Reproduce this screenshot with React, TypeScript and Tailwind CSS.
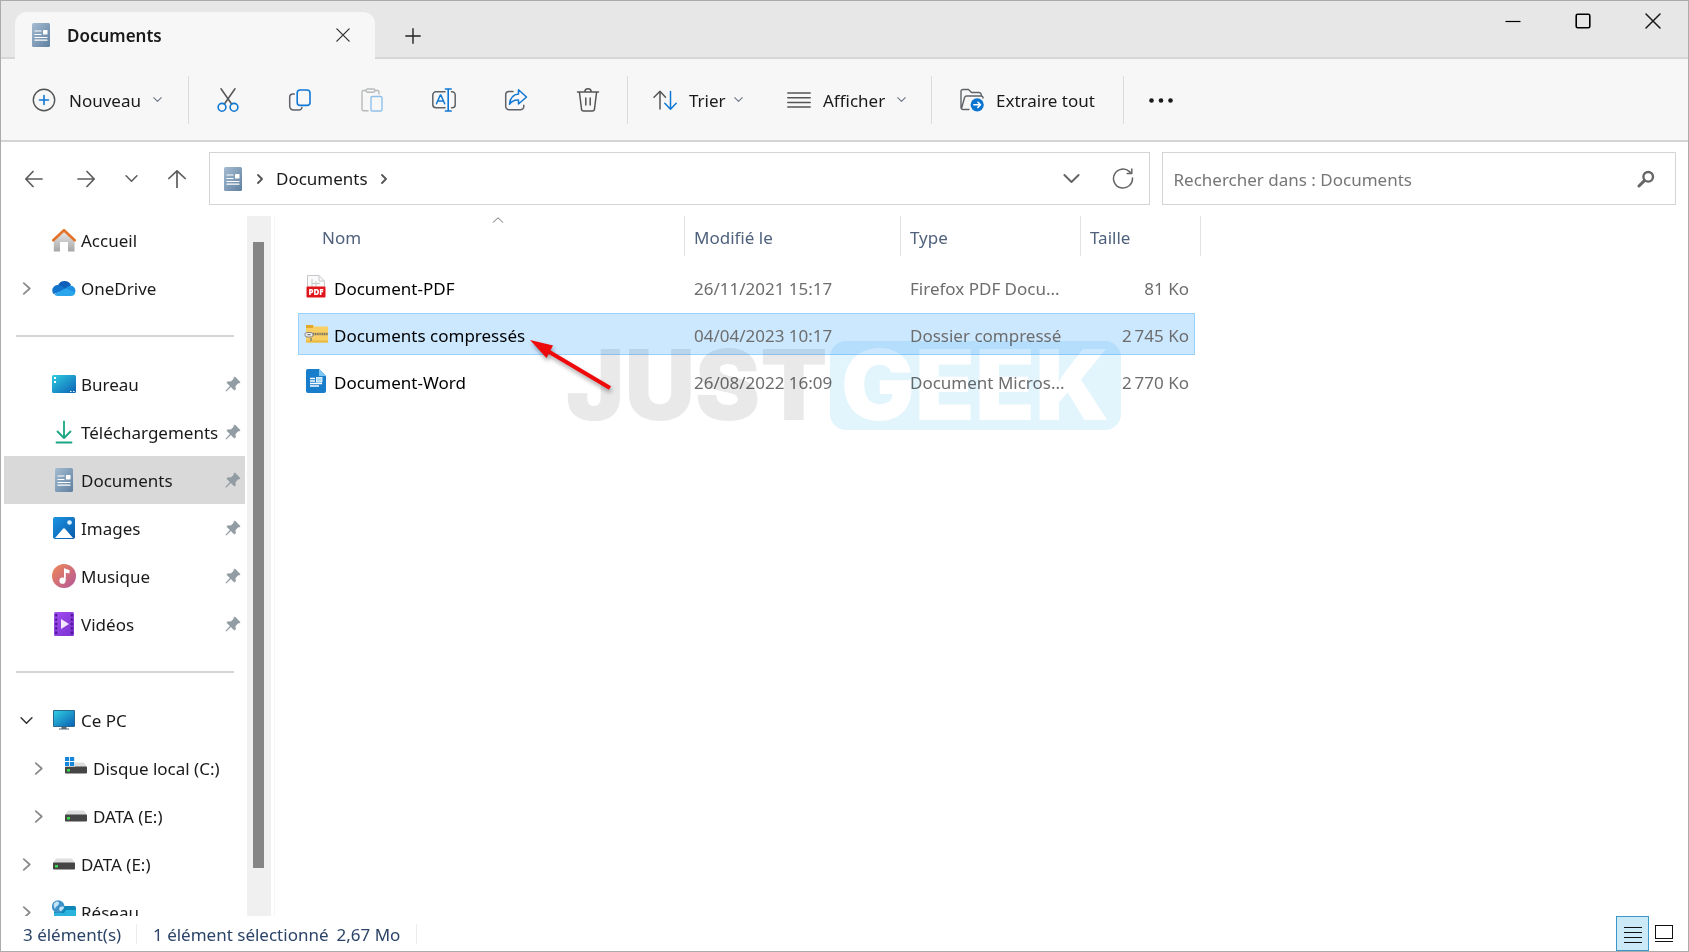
import { useState } from "react"
import type { ReactNode } from "react"

type IconProps = { className?: string }

const stroke = {
  fill: "none",
  strokeLinecap: "round" as const,
  strokeLinejoin: "round" as const,
}

/* ---------- Generic glyphs ---------- */

function ChevronDown({ className = "w-[9px] h-[9px] text-gray-500" }: IconProps) {
  return (
    <svg viewBox="0 0 12 12" className={className} stroke="currentColor" strokeWidth="1.4" {...stroke}>
      <path d="M1 3.5 6 8.5 11 3.5" />
    </svg>
  )
}

function ChevronRight({ className = "w-3 h-3 text-gray-500" }: IconProps) {
  return (
    <svg viewBox="0 0 12 12" className={className} stroke="currentColor" strokeWidth="1.6" {...stroke}>
      <path d="M3.5 1 9 6 3.5 11" />
    </svg>
  )
}

function CrumbArrow() {
  return (
    <svg viewBox="0 0 6 10" className="h-[10px] w-1.5" stroke="#555" strokeWidth="1.8" {...stroke}>
      <path d="M1 1 5 5 1 9" />
    </svg>
  )
}

function CloseIcon({ className = "w-4 h-4" }: IconProps) {
  return (
    <svg viewBox="0 0 16 16" className={className} stroke="currentColor" strokeWidth="1.5" {...stroke}>
      <path d="M1 1 15 15M15 1 1 15" />
    </svg>
  )
}

function DocumentsIcon() {
  return (
    <svg viewBox="0 0 24 24" className="w-6 h-6 shrink-0">
      <defs>
        <linearGradient id="docGrad" x1="0" y1="0" x2="1" y2="1">
          <stop offset="0" stopColor="#a4bcd2" />
          <stop offset="1" stopColor="#5f80a0" />
        </linearGradient>
      </defs>
      <rect x="3" y="0" width="18" height="24" rx="1.5" fill="url(#docGrad)" />
      <path d="M6 8h6M6 11.5h6M6 14.5h12M6 17.2h12" stroke="#fff" strokeWidth="1.2" strokeLinecap="round" />
      <rect x="14" y="7" width="4.5" height="4.5" rx="0.6" fill="#fff" />
    </svg>
  )
}

/* ---------- Toolbar icons ---------- */

function NewIcon() {
  return (
    <svg viewBox="0 0 24 24" className="w-6 h-6" strokeWidth="1.4" {...stroke}>
      <circle cx="12" cy="12" r="10.7" stroke="#555" />
      <path d="M12 7.5v9M7.5 12h9" stroke="#0f78d4" strokeWidth="1.6" />
    </svg>
  )
}

function CutIcon() {
  return (
    <svg viewBox="0 0 24 24" className="w-6 h-6" strokeWidth="1.5" {...stroke}>
      <path d="M5 .8 15.6 16M19 .8 8.4 16" stroke="#555" />
      <circle cx="6" cy="19.3" r="3.9" stroke="#0f78d4" strokeWidth="1.6" />
      <circle cx="18" cy="19.3" r="3.9" stroke="#0f78d4" strokeWidth="1.6" />
    </svg>
  )
}

function CopyIcon() {
  return (
    <svg viewBox="0 0 24 24" className="w-6 h-6" strokeWidth="1.5" {...stroke}>
      <path d="M6.3 6H5a3.3 3.3 0 0 0-3.3 3.3v8.9A3.8 3.8 0 0 0 5.5 22h5.3a3.2 3.2 0 0 0 3.1-2.4" stroke="#5f6368" />
      <rect x="9.2" y="2" width="12.8" height="15.4" rx="3" stroke="#0f78d4" strokeWidth="1.6" />
    </svg>
  )
}

function PasteIcon() {
  return (
    <svg viewBox="0 0 24 24" className="w-6 h-6" strokeWidth="1.4" {...stroke}>
      <path d="M8 22.8H3.5A1.5 1.5 0 0 1 2 21.3V4a1.5 1.5 0 0 1 1.5-1.5H6M15 2.5h2.5A1.5 1.5 0 0 1 19 4v2" stroke="#b8babc" />
      <rect x="6" y="1" width="9" height="3.2" rx="1.6" stroke="#b8babc" />
      <rect x="11" y="8.5" width="11" height="14.5" rx="1.3" stroke="#8fc0ea" />
    </svg>
  )
}

function RenameIcon() {
  return (
    <svg viewBox="0 0 24 24" className="w-6 h-6" strokeWidth="1.5" {...stroke}>
      <path d="M13 3.8H4A3.2 3.2 0 0 0 .8 7v9.5A3.2 3.2 0 0 0 4 19.7h9M19.5 3.8h.7a3 3 0 0 1 3 3v9.9a3 3 0 0 1-3 3h-.7" stroke="#5f6368" />
      <path d="M4.500 15.800 8.300 7h.6l3.800 8.800M5.800 13h5.600" stroke="#0f78d4" />
      <path d="M16.200 1v22M13.400 1h5.800M13.400 23h5.800" stroke="#0f78d4" strokeWidth="1.6" />
    </svg>
  )
}

function ShareIcon() {
  return (
    <svg viewBox="0 0 24 24" className="w-6 h-6" strokeWidth="1.5" {...stroke}>
      <path d="M9 3.500H5A3.300 3.300 0 0 0 1.700 6.800V18.500A3.300 3.300 0 0 0 5 21.800h11.500a3.300 3.300 0 0 0 3.300-3.300v-1.200" stroke="#5f6368" />
      <path d="M14.500 1.800 22.500 9l-8 7v-4c-4-.3-6.700 1-9 4.200.6-6 3.600-9.800 9-10.200z" stroke="#0f78d4" />
    </svg>
  )
}

function TrashIcon() {
  return (
    <svg viewBox="0 0 24 24" className="w-6 h-6" stroke="#555" strokeWidth="1.5" {...stroke}>
      <path d="M1.500 4h21M3.400 4l2.100 17A2.200 2.200 0 0 0 7.700 23h8.600a2.200 2.200 0 0 0 2.200-2L20.600 4M8.800 4a3.200 3.200 0 0 1 6.400 0M9.800 10v7M14.200 10v7" />
    </svg>
  )
}

function SortIcon() {
  return (
    <svg viewBox="0 0 24 24" className="w-6 h-6" strokeWidth="1.5" {...stroke}>
      <path d="M7 21V3.500M1 9.300l6-6 5.500 6" stroke="#555" />
      <path d="M17.500 3.500v17.800M11.800 15.300l5.700 6 5.700-6" stroke="#0f78d4" />
    </svg>
  )
}

function LinesIcon() {
  return (
    <svg viewBox="0 0 24 24" className="w-6 h-6" stroke="#555" strokeWidth="1.5" {...stroke}>
      <path d="M.8 5h22.400M.8 9.700h22.400M.8 14.400h22.400M.8 19.100h22.400" />
    </svg>
  )
}

function ExtractIcon() {
  return (
    <svg viewBox="0 0 24 24" className="w-6 h-6" strokeWidth="1.4" {...stroke}>
      <path d="M9 21.500H3A2 2 0 0 1 1 19.500V3.500a2 2 0 0 1 2-2h5.500l3 3H19a2.300 2.300 0 0 1 2.300 2.300V8M1.500 20.500 4.600 9.500A2.200 2.200 0 0 1 6.700 8H21a2 2 0 0 1 2 2" stroke="#5f6368" />
      <circle cx="17.200" cy="16.800" r="6.600" fill="#0a74cf" />
      <path d="M13.800 16.800h6.600M17.900 14.200l2.600 2.600-2.600 2.600" stroke="#fff" strokeWidth="1.5" />
    </svg>
  )
}

function MoreIcon() {
  return (
    <svg viewBox="0 0 24 24" className="w-6 h-6" fill="#1a1a1a">
      <circle cx="2.5" cy="12.500" r="2.3" />
      <circle cx="12" cy="12.500" r="2.3" />
      <circle cx="21.5" cy="12.500" r="2.3" />
    </svg>
  )
}

/* ---------- Sidebar icons ---------- */

function HomeIcon() {
  return (
    <svg viewBox="0 0 24 24" className="w-6 h-6">
      <defs>
        <linearGradient id="homeGrad" x1="0" y1="0" x2="0" y2="1">
          <stop offset="0" stopColor="#e8e8e8" />
          <stop offset="1" stopColor="#a6a6a6" />
        </linearGradient>
      </defs>
      <path d="M12 3.500 1.800 12.500V23.500H8V14h8v9.500h6.500v-11z" fill="url(#homeGrad)" />
      <path d="M1.300 12.300 12 2.200 22.700 12.300" fill="none" stroke="#e3722a" strokeWidth="2.6" strokeLinecap="round" strokeLinejoin="round" />
    </svg>
  )
}

function OneDriveIcon() {
  return (
    <svg viewBox="0 0 24 24" className="w-6 h-6">
      <path d="M6 9.200A7.200 7.200 0 0 1 19 9l-5 5.500z" fill="#0f5fb8" />
      <path d="M5.500 9A5.600 5.600 0 0 0 1.500 18L14 14 9.500 10A7 7 0 0 0 5.500 9z" fill="#1173cc" />
      <path d="M18.500 9.500A5.200 5.200 0 0 1 22.800 17l-9.800-4A8 8 0 0 1 18.500 9.500z" fill="#1c8fe0" />
      <path d="M2.200 18.300 13.500 12.200l9.800 4.600A4.500 4.500 0 0 1 19 20H5.500a5 5 0 0 1-3.300-1.700z" fill="#2aa5ec" />
    </svg>
  )
}

function DesktopIcon() {
  return (
    <svg viewBox="0 0 24 24" className="w-6 h-6">
      <defs>
        <linearGradient id="deskGrad" x1="0" y1="0" x2="1" y2="1">
          <stop offset="0" stopColor="#30cde0" />
          <stop offset="1" stopColor="#0b61b5" />
        </linearGradient>
      </defs>
      <rect y="3" width="24" height="18" rx="1.5" fill="url(#deskGrad)" />
      <path d="M2 5h2v2H2zM2 9h2v2H2zM18 19h1.500v1H18zM21 19h1.500v1H21z" fill="#fff" />
    </svg>
  )
}

function DownloadIcon() {
  return (
    <svg viewBox="0 0 24 24" className="w-6 h-6" stroke="#19a583" strokeWidth="1.8" {...stroke}>
      <path d="M12 1.500v16M5.500 11.500l6.500 6.500 6.500-6.500M4.500 22.500h15" />
    </svg>
  )
}

function ImagesIcon() {
  return (
    <svg viewBox="0 0 24 24" className="w-6 h-6">
      <defs>
        <linearGradient id="imgGrad" x1="0" y1="0" x2="1" y2="1">
          <stop offset="0" stopColor="#1a94e3" />
          <stop offset="1" stopColor="#0a5aa8" />
        </linearGradient>
      </defs>
      <rect x="1" y="1" width="22" height="22" rx="2" fill="url(#imgGrad)" />
      <path d="M3 22 10.800 13a1.600 1.600 0 0 1 2.400 0L21 22z" fill="#fff" />
      <circle cx="17.5" cy="6.5" r="2.3" fill="#dff2ff" />
    </svg>
  )
}

function MusicIcon() {
  return (
    <svg viewBox="0 0 24 24" className="w-6 h-6">
      <defs>
        <linearGradient id="musicGrad" x1="0" y1="0" x2="1" y2="1">
          <stop offset="0" stopColor="#ef8a55" />
          <stop offset="1" stopColor="#b4549a" />
        </linearGradient>
      </defs>
      <circle cx="12" cy="12" r="12" fill="url(#musicGrad)" />
      <path d="M12 4.500 17.500 6v3.500L13.500 8.800V16.500z" fill="#fff" />
      <path d="M12 4.500h1.600v12H12z" fill="#fff" />
      <circle cx="10.5" cy="16.7" r="3.1" fill="#fff" />
    </svg>
  )
}

function VideoIcon() {
  return (
    <svg viewBox="0 0 24 24" className="w-6 h-6">
      <defs>
        <linearGradient id="vidGrad" x1="0" y1="0" x2="1" y2="1">
          <stop offset="0" stopColor="#a24ff0" />
          <stop offset="1" stopColor="#7a30d0" />
        </linearGradient>
      </defs>
      <rect x="2" y="0" width="20" height="24" rx="1.5" fill="url(#vidGrad)" />
      <path d="M4.200 2v20M19.800 2v20" stroke="#4a1590" strokeWidth="2" strokeDasharray="2.4 2" />
      <path d="M9 7v10l8-5z" fill="#f3e6ff" />
    </svg>
  )
}

function PcIcon() {
  return (
    <svg viewBox="0 0 24 24" className="w-6 h-6">
      <rect x="1" y="2" width="22" height="17" rx="1" fill="#27688c" />
      <rect x="2" y="3" width="20" height="15" fill="url(#deskGrad)" />
      <path d="M9.500 19h5v1.500H17V21.500H7V20.500h2.500z" fill="#5d6a74" />
    </svg>
  )
}

function DriveIcon({ system = false }: { system?: boolean }) {
  return (
    <svg viewBox="0 0 24 24" className="w-6 h-6">
      <path d="M4 6.500h16l3 4.500H1z" fill="#dedede" />
      <rect x="1" y="10.5" width="22" height="7" rx="0.8" fill="#454545" />
      <rect x="3" y="13" width="3" height="2.5" fill="#3ddc55" />
      {system && <path d="M0 0h11v10.500H0z" fill="#fff" />}
      {system && <path d="M1 1h4.200v4H1zM6 1h4.200v4H6zM1 6h4.200v4H1zM6 6h4.200v4H6z" fill="#1487dd" />}
    </svg>
  )
}

function NetworkIcon() {
  return (
    <svg viewBox="0 0 24 24" className="w-6 h-6">
      <path d="M6 6h16.500A1.500 1.500 0 0 1 24 7.500V22H2V12z" fill="#0f86b8" />
      <path d="M2 13h10l2-3h10v12H2z" fill="#2ab3dc" />
      <circle cx="6.2" cy="6.5" r="6.3" fill="#3f93c9" />
      <path d="M2 3.500c3-3 5-2 5 0S4 6 3.500 8 1 6 2 3.500zM8 7c2-1 4-.5 4 .5S9 11.500 8 11 7 8 8 7z" fill="#c5e4f5" />
    </svg>
  )
}

function PinIcon() {
  return (
    <svg viewBox="0 0 16 16" className="w-4 h-4" fill="#929ca3">
      <path d="M9.800.5 15.500 6.200 14 7.600 13.200 7.300 10.500 10.200 10.800 13.200 9.300 14.500 5.900 11.100 1.600 15.200.500 15.500.700 14.400 4.900 10.100 1.500 6.700 2.900 5.300 5.800 5.500 8.700 2.800 8.400 1.900z" />
    </svg>
  )
}

/* ---------- File icons ---------- */

function PdfIcon() {
  return (
    <svg viewBox="0 0 24 24" className="w-6 h-6">
      <path d="M3.500.5H15l5.500 5.500V13H3.500z" fill="#fafafa" stroke="#c4c8cc" />
      <path d="M15 .5V6h5.500M8 4v8M12 6v6M8 8.500h8" fill="none" stroke="#c4c8cc" />
      <rect x="2.5" y="11.5" width="19" height="11" rx="1" fill="#e0141b" />
      <text x="12" y="19.8" textAnchor="middle" fontSize="8" fontWeight="800" fontFamily="Open Sans, sans-serif" fill="#fff">
        PDF
      </text>
    </svg>
  )
}

function ZipIcon() {
  return (
    <svg viewBox="0 0 24 24" className="w-6 h-6">
      <path d="M2 3h7l1.500 1.500H24V20.500H2z" fill="#f7cf62" />
      <path d="M2 3h7V6H2z" fill="#e3a82a" />
      <path d="M2 18.500h22v2H2z" fill="#e9b93f" />
      <path d="M9 12h15" stroke="#7f7a68" strokeWidth="2.6" strokeDasharray="1.3 .5" />
      <rect x="1" y="10.500" width="8" height="4.500" rx="2" fill="#ececec" stroke="#858585" />
      <path d="M3.500 12.700h3M7 16v3" stroke="#777" strokeWidth="1.3" />
    </svg>
  )
}

function WordIcon() {
  return (
    <svg viewBox="0 0 24 24" className="w-6 h-6">
      <path d="M4 0h11l7 7v15a2 2 0 0 1-2 2H4a2 2 0 0 1-2-2V2a2 2 0 0 1 2-2z" fill="#187dcb" />
      <path d="M15 0 22 7H15z" fill="#7cc8f5" />
      <path d="M6 9.500h5M6 12h5M6 14.500h12M6 17h9" stroke="#fff" strokeWidth="1.3" />
      <rect x="12.5" y="8.5" width="5.5" height="4.5" fill="#a8dbf8" stroke="#fff" strokeWidth="0.8" />
    </svg>
  )
}

/* ---------- Data ---------- */

interface SideItem {
  id: string
  label: string
  icon: ReactNode
  arrow?: "right" | "down"
  pinned?: boolean
  nested?: boolean
}

const groups: SideItem[][] = [
  [
    { id: "home", label: "Accueil", icon: <HomeIcon /> },
    { id: "onedrive", label: "OneDrive", icon: <OneDriveIcon />, arrow: "right" },
  ],
  [
    { id: "desktop", label: "Bureau", icon: <DesktopIcon />, pinned: true },
    { id: "downloads", label: "Téléchargements", icon: <DownloadIcon />, pinned: true },
    { id: "documents", label: "Documents", icon: <DocumentsIcon />, pinned: true },
    { id: "images", label: "Images", icon: <ImagesIcon />, pinned: true },
    { id: "music", label: "Musique", icon: <MusicIcon />, pinned: true },
    { id: "videos", label: "Vidéos", icon: <VideoIcon />, pinned: true },
  ],
  [
    { id: "pc", label: "Ce PC", icon: <PcIcon />, arrow: "down" },
    { id: "c", label: "Disque local (C:)", icon: <DriveIcon system />, arrow: "right", nested: true },
    { id: "e-nested", label: "DATA (E:)", icon: <DriveIcon />, arrow: "right", nested: true },
    { id: "e", label: "DATA (E:)", icon: <DriveIcon />, arrow: "right" },
    { id: "network", label: "Réseau", icon: <NetworkIcon />, arrow: "right" },
  ],
]

const files = [
  { name: "Document-PDF", date: "26/11/2021 15:17", type: "Firefox PDF Docu...", size: "81 Ko", icon: <PdfIcon /> },
  { name: "Documents compressés", date: "04/04/2023 10:17", type: "Dossier compressé", size: "2\u2009745 Ko", icon: <ZipIcon /> },
  { name: "Document-Word", date: "26/08/2022 16:09", type: "Document Micros...", size: "2\u2009770 Ko", icon: <WordIcon /> },
]

const actions = [
  { label: "Couper", icon: <CutIcon /> },
  { label: "Copier", icon: <CopyIcon /> },
  { label: "Coller", icon: <PasteIcon />, disabled: true },
  { label: "Renommer", icon: <RenameIcon /> },
  { label: "Partager", icon: <ShareIcon /> },
  { label: "Supprimer", icon: <TrashIcon /> },
]

/* ---------- Sections ---------- */

function TitleBar() {
  return (
    <header className="flex h-[58px] shrink-0 items-end bg-[#e7e7e7] shadow-[inset_0_-2px_0_#d6d6d6]">
      <div className="ml-[14px] flex h-[47px] w-[360px] items-center rounded-t-xl bg-[#f7f7f7] pr-[25px] pl-[14px] pb-0.5">
        <DocumentsIcon />
        <span className="ml-[14px] flex-1 pt-0.5 font-semibold text-[#1a1a1a]">Documents</span>
        <button aria-label="Fermer l'onglet" className="text-[#333]">
          <CloseIcon className="w-[14px] h-[14px]" />
        </button>
      </div>
      <button aria-label="Nouvel onglet" className="mb-[15px] ml-[30px]">
        <svg viewBox="0 0 16 16" className="w-4 h-4" stroke="#222" strokeWidth="1.4" {...stroke}>
          <path d="M8 .8v14.400M.8 8h14.400" />
        </svg>
      </button>
      <div className="ml-auto flex h-10 items-center self-start">
        <button aria-label="Réduire" className="flex w-[70px] justify-center">
          <svg viewBox="0 0 16 16" className="w-4 h-4" stroke="#000" strokeWidth="1.2">
            <path d="M.5 8.500h15" />
          </svg>
        </button>
        <button aria-label="Agrandir" className="flex w-[70px] justify-center">
          <svg viewBox="0 0 16 16" className="w-4 h-4" stroke="#000" strokeWidth="1.6" fill="none">
            <rect x="1.2" y="1.2" width="13.6" height="13.6" rx="1.5" />
          </svg>
        </button>
        <button aria-label="Fermer" className="flex w-[70px] justify-center">
          <CloseIcon />
        </button>
      </div>
    </header>
  )
}

function Separator() {
  return <div className="h-12 w-px shrink-0 bg-[#dcdcdc]" />
}

function Toolbar() {
  return (
    <div className="flex h-[83px] shrink-0 items-center border-b-2 border-[#d4d4d4] bg-[#f7f7f7]">
      <button className="flex w-[187px] items-center pl-[31px]">
        <NewIcon />
        <span className="mr-3 ml-[13px] pt-0.5">Nouveau</span>
        <ChevronDown />
      </button>
      <Separator />
      <div className="mx-[3px] flex">
        {actions.map((a) => (
          <button key={a.label} aria-label={a.label} disabled={a.disabled} className="flex w-[72px] justify-center">
            {a.icon}
          </button>
        ))}
      </div>
      <Separator />
      <button className="flex w-[134px] items-center pl-[25px]">
        <SortIcon />
        <span className="mr-2 ml-3 pt-0.5">Trier</span>
        <ChevronDown />
      </button>
      <button className="flex w-[169px] items-center pl-[25px]">
        <LinesIcon />
        <span className="mr-3 ml-3 pt-0.5">Afficher</span>
        <ChevronDown />
      </button>
      <Separator />
      <button className="flex w-[191px] items-center pl-7">
        <ExtractIcon />
        <span className="ml-3 pt-0.5">Extraire tout</span>
      </button>
      <Separator />
      <button aria-label="Plus" className="ml-[25px]">
        <MoreIcon />
      </button>
    </div>
  )
}

function AddressRow() {
  const [query, setQuery] = useState("")

  return (
    <div className="grid shrink-0 grid-cols-[196px_11fr_6fr] items-center gap-3 pt-[10px] pr-3">
      <div className="flex items-center pl-6 text-[#5c5c5c]">
        <button aria-label="Précédent">
          <svg viewBox="0 0 18 18" className="w-[18px] h-[18px]" stroke="currentColor" strokeWidth="1.7" {...stroke}>
            <path d="M17 9H1M8 1.500.8 9 8 16.500" />
          </svg>
        </button>
        <button aria-label="Suivant" className="ml-[34px]">
          <svg viewBox="0 0 18 18" className="w-[18px] h-[18px]" stroke="currentColor" strokeWidth="1.7" {...stroke}>
            <path d="M1 9h16M10 1.500 17.200 9 10 16.500" />
          </svg>
        </button>
        <button aria-label="Emplacements récents" className="ml-[30px]">
          <ChevronDown className="w-[13px] h-[13px]" />
        </button>
        <button aria-label="Dossier parent" className="ml-[30px]">
          <svg viewBox="0 0 18 18" className="w-[18px] h-[18px]" stroke="currentColor" strokeWidth="1.7" {...stroke}>
            <path d="M9 17.500V1M.8 8.500 9 .8l8.200 7.700" />
          </svg>
        </button>
      </div>

      <div className="flex h-[53px] min-w-0 items-center border border-[#d4d4d4] pr-[15px] pl-[11px]">
        <DocumentsIcon />
        <div className="ml-3 flex items-center gap-[13px]">
          <CrumbArrow />
          <button>Documents</button>
          <CrumbArrow />
        </div>
        <button aria-label="Historique" className="mr-8 ml-auto">
          <ChevronDown className="w-[17px] h-[17px] text-[#666]" />
        </button>
        <button aria-label="Actualiser">
          <svg viewBox="0 0 22 22" className="w-[22px] h-[22px]" stroke="#666" strokeWidth="1.5" {...stroke}>
            <path d="M20.500 10a9.500 9.500 0 1 1-3-6.400l1.700 1.700M19.800 .9v4.600h-4.600" />
          </svg>
        </button>
      </div>

      <div className="flex h-[53px] min-w-0 items-center border border-[#d4d4d4] pr-5 pl-[10px]">
        <input
          type="text"
          aria-label="Rechercher dans : Documents"
          placeholder="Rechercher dans : Documents"
          value={query}
          onChange={(e) => setQuery(e.target.value)}
          className="min-w-0 flex-1 pt-0.5 outline-none placeholder:text-[#767676]"
        />
        <button aria-label="Rechercher">
          <svg viewBox="0 0 18 18" className="w-[18px] h-[18px]" stroke="#666" {...stroke}>
            <circle cx="11.2" cy="6.8" r="4.8" strokeWidth="2.4" />
            <path d="M7.400 10.600 2 16" strokeWidth="3" />
          </svg>
        </button>
      </div>
    </div>
  )
}

function Sidebar() {
  const [active, setActive] = useState("documents")

  return (
    <aside className="flex w-[270px] shrink-0 overflow-hidden">
      <nav className="flex-1 overflow-hidden pr-0.5 pl-[3px]">
        {groups.map((group, idx) => (
          <div key={idx}>
            {idx > 0 && (
              <div className="flex h-12 items-center pr-[11px] pl-3">
                <hr className="flex-1 border-t-2 border-[#d4d4d4]" />
              </div>
            )}
            {group.map((item) => (
              <a
                key={item.id}
                href={`#${item.id}`}
                onClick={() => setActive(item.id)}
                className={`flex h-12 items-center pr-1 ${item.nested ? "pl-7" : "pl-4"} ${
                  active === item.id ? "bg-[#d9d9d9]" : ""
                }`}
              >
                <span className="mr-[19px] w-[13px]">
                  {item.arrow === "right" && <ChevronRight className="w-[13px] h-[13px] text-[#8a8a8a]" />}
                  {item.arrow === "down" && <ChevronDown className="w-[13px] h-[13px] text-[#333]" />}
                </span>
                {item.icon}
                <span className="ml-[5px] flex-1 pt-0.5 whitespace-nowrap">{item.label}</span>
                {item.pinned && <PinIcon />}
              </a>
            ))}
          </div>
        ))}
      </nav>
      <div className="w-6 bg-[#f0f0f0] pt-[26px] pb-12 pl-1.5">
        <div className="h-full w-[11px] bg-[#858585]" />
      </div>
    </aside>
  )
}

function Watermark() {
  return (
    <div
      aria-hidden="true"
      className="pointer-events-none absolute top-[120px] left-[291px] flex items-center gap-0.5 font-[Inter] text-[98px] leading-none font-black mix-blend-multiply"
    >
      <span className="text-[#e9e9e9]">JUST</span>
      <span className="flex h-[89px] w-[291px] items-center justify-center rounded-2xl bg-[#e2f4fc] text-white">GEEK</span>
    </div>
  )
}

function Arrow() {
  return (
    <svg viewBox="0 0 90 60" className="pointer-events-none absolute top-[120px] left-[251px] h-[60px] w-[90px] drop-shadow-[1px_3px_2px_rgba(0,0,0,0.35)]">
      <path d="M20 14 84 52" stroke="#ee0a0a" strokeWidth="4" />
      <path d="M4 4 27 9.500 20.500 22z" fill="#ee0a0a" />
    </svg>
  )
}

function FileList() {
  const [selected, setSelected] = useState(1)

  return (
    <main className="relative ml-[3px] flex-1 border-l border-[#f5f5f5] pl-[23px]">
      <table className="-mt-[5px] w-[897px] table-fixed border-separate border-spacing-x-0 border-spacing-y-[5px]">
        <colgroup>
          <col className="w-[387px]" />
          <col className="w-[216px]" />
          <col className="w-[180px]" />
          <col />
        </colgroup>
        <thead className="text-left text-[#4f617c]">
          <tr className="h-[45px] align-top">
            <th className="relative p-0 font-normal">
              <div className="flex h-10 items-center border-r border-[#e3e3e3] pt-[3px] pl-6">Nom</div>
              <svg viewBox="0 0 12 6" className="absolute top-px left-[194px] h-1.5 w-3" stroke="#777" {...stroke}>
                <path d="M1 5.500 6 .8l5 4.700" />
              </svg>
            </th>
            <th className="p-0 font-normal">
              <div className="flex h-10 items-center border-r border-[#e3e3e3] pt-[3px] pl-[9px]">Modifié le</div>
            </th>
            <th className="p-0 font-normal">
              <div className="flex h-10 items-center border-r border-[#e3e3e3] pt-[3px] pl-[9px]">Type</div>
            </th>
            <th className="p-0 font-normal">
              <div className="-mr-1.5 flex h-10 items-center border-r border-[#e3e3e3] pt-[3px] pl-[9px]">Taille</div>
            </th>
          </tr>
        </thead>
        <tbody>
          {files.map((file, i) => {
            const cell = selected === i ? "border-[#99d1ff] bg-[#cce8ff]" : "border-transparent"
            return (
              <tr key={file.name} onClick={() => setSelected(i)} className="h-[42px] text-[#6d6d6d]">
                <td className={`border-y border-l py-0 pr-0 pl-[5px] ${cell}`}>
                  <div className="flex items-center gap-[6px] text-black">
                    {file.icon}
                    <span className="pt-[3px]">{file.name}</span>
                  </div>
                </td>
                <td className={`border-y pt-[3px] pr-0 pb-0 pl-[9px] ${cell}`}>{file.date}</td>
                <td className={`border-y pt-[3px] pr-0 pb-0 pl-[9px] whitespace-nowrap ${cell}`}>{file.type}</td>
                <td className={`border-y border-r pt-[3px] pr-[5px] pb-0 pl-0 text-right ${cell}`}>{file.size}</td>
              </tr>
            )
          })}
        </tbody>
      </table>
      <Watermark />
      <Arrow />
    </main>
  )
}

function StatusBar() {
  return (
    <footer className="flex h-[35px] shrink-0 items-center pr-[15px] pl-[22px] text-[#2c4468]">
      <span className="w-[113px] pt-0.5">3 élément(s)</span>
      <div className="h-5 w-px bg-[#ececec]" />
      <span className="ml-4 pt-0.5">1 élément sélectionné</span>
      <span className="mr-4 ml-2 pt-0.5">2,67 Mo</span>
      <div className="h-5 w-px bg-[#ececec]" />
      <button aria-label="Détails" className="ml-auto flex h-full w-[33px] items-center justify-center border border-[#3c97c9] bg-[#cbe9f7]">
        <svg viewBox="0 0 18 18" className="w-[18px] h-[18px]" stroke="#111" strokeWidth="1">
          <path d="M0 2.500h18M0 7.500h18M0 12.500h18M0 17.500h18" />
        </svg>
      </button>
      <button aria-label="Grandes icônes" className="ml-[6px]">
        <svg viewBox="0 0 18 18" className="w-[18px] h-[18px]" stroke="#111" strokeWidth="1" fill="none">
          <rect x=".5" y=".5" width="17" height="13" />
          <path d="M0 16.500h18" />
        </svg>
      </button>
    </footer>
  )
}

export default function App() {
  return (
    <div className="flex h-screen flex-col overflow-hidden border border-[#ababab] bg-white font-['Noto_Sans','Open_Sans',sans-serif] text-[17px] leading-6 text-[#1a1a1a]">
      <TitleBar />
      <Toolbar />
      <AddressRow />
      <div className="mt-[11px] flex min-h-0 flex-1">
        <Sidebar />
        <FileList />
      </div>
      <StatusBar />
    </div>
  )
}
